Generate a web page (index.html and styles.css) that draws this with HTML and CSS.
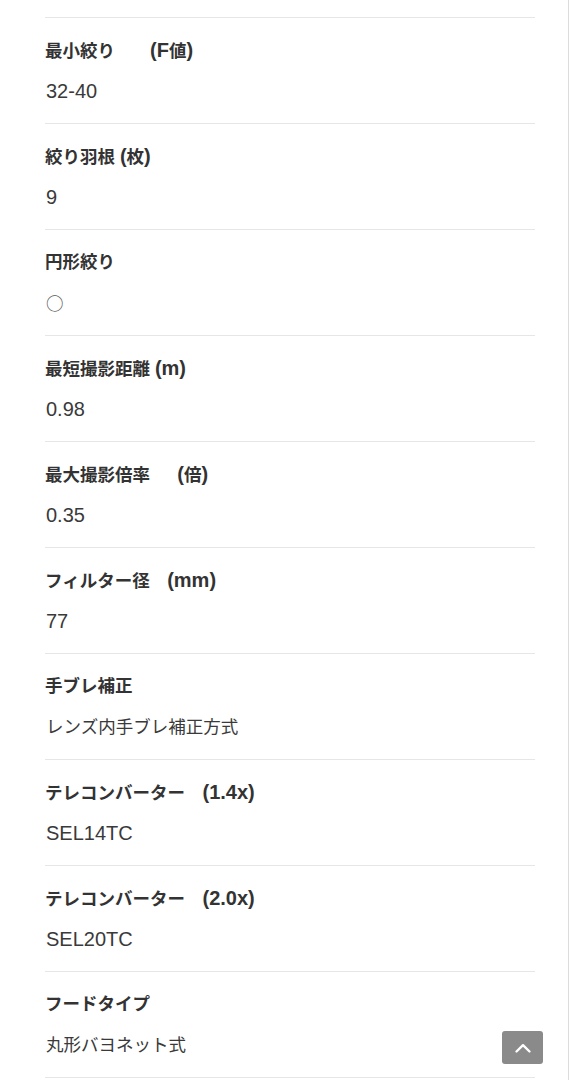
FILE: index.html
```
<!DOCTYPE html>
<html lang="ja">
  <head>
    <meta charset="utf-8" />
    <title>レンズ仕様</title>
    <meta name="viewport" content="width=device-width, initial-scale=1" />
    <link rel="stylesheet" href="styles.css">
  </head>
  <body>
    <main class="page">
      <dl class="spec-list">
        <div class="spec-row">
          <dt>最小絞り　　<span class="en">(F</span>値<span class="en">)</span></dt>
          <dd class="en">32-40</dd>
        </div>
        <div class="spec-row">
          <dt>絞り羽根 <span class="en">(</span>枚<span class="en">)</span></dt>
          <dd class="en">9</dd>
        </div>
        <div class="spec-row">
          <dt>円形絞り</dt>
          <dd class="mark">○</dd>
        </div>
        <div class="spec-row">
          <dt>最短撮影距離 <span class="en">(m)</span></dt>
          <dd class="en">0.98</dd>
        </div>
        <div class="spec-row">
          <dt>最大撮影倍率　&nbsp; <span class="en">(</span>倍<span class="en">)</span></dt>
          <dd class="en">0.35</dd>
        </div>
        <div class="spec-row">
          <dt>フィルター径　<span class="en">(mm)</span></dt>
          <dd class="en">77</dd>
        </div>
        <div class="spec-row">
          <dt>手ブレ補正</dt>
          <dd>レンズ内手ブレ補正方式</dd>
        </div>
        <div class="spec-row">
          <dt>テレコンバーター　<span class="en">(1.4x)</span></dt>
          <dd class="en">SEL14TC</dd>
        </div>
        <div class="spec-row">
          <dt>テレコンバーター　<span class="en">(2.0x)</span></dt>
          <dd class="en">SEL20TC</dd>
        </div>
        <div class="spec-row">
          <dt>フードタイプ</dt>
          <dd>丸形バヨネット式</dd>
        </div>
      </dl>
    </main>
    <a class="page-top" href="#" aria-label="ページトップへ">
      <svg width="18" height="12" viewBox="0 0 18 12" fill="none">
        <path d="M2.5 9.5 L9 3.2 L15.5 9.5" stroke="#fff" stroke-width="2.4" stroke-linecap="round" stroke-linejoin="round" />
      </svg>
    </a>
  </body>
</html>
```

FILE: styles.css
```
html,
body {
  margin: 0;
  padding: 0;
  background: #fff;
}
body {
  font-family: "Liberation Sans", Arial, "Noto Sans CJK JP", sans-serif;
  color: #333;
  min-height: 1080px;
  border-right: 1px solid #dcdcdc;
  box-sizing: border-box;
}
.page {
  padding: 17px 33px 0 45px;
}
.spec-list {
  margin: 0;
  border-top: 1px solid #e6e6e6;
}
.spec-row {
  padding: 21px 0 21px;
  border-bottom: 1px solid #e6e6e6;
}
.spec-row dt,
.spec-row dd {
  height: 22px;
  line-height: 22px;
  font-size: 17.5px;
}
.spec-row dt {
  font-weight: bold;
  color: #333;
}
.spec-row dd {
  margin: 19px 0 0 1px;
  color: #3a3a3a;
}
.spec-row .en {
  font-size: 20px;
  line-height: 22px;
}
.spec-row dd.mark {
  font-family: "Noto Sans CJK JP", sans-serif;
  color: #555;
}
.page-top {
  position: fixed;
  right: 26px;
  bottom: 16px;
  width: 41px;
  height: 33px;
  border-radius: 3px;
  background: #8a8a8a;
  display: flex;
  align-items: center;
  justify-content: center;
}
```
